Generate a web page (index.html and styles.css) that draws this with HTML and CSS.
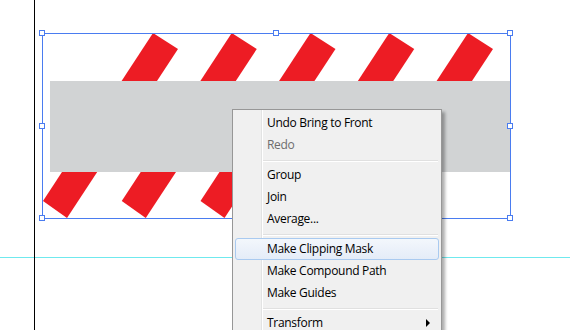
FILE: index.html
```html
<!DOCTYPE html>
<html>
<head>
<meta charset="utf-8">
<link rel="stylesheet" href="styles.css">
</head>
<body>
<div class="canvas">
  <svg class="art" width="570" height="330" viewBox="0 0 570 330">
    <line x1="0" y1="257.5" x2="570" y2="257.5" class="guide"/>
    <line x1="34.5" y1="0" x2="34.5" y2="330" class="edge"/>
    <g class="stripes">
      <polygon points="153,33 178,49 67,218 43,201"/>
      <polygon points="231.75,33 256.75,49 145.75,218 121.75,201"/>
      <polygon points="310.5,33 335.5,49 224.5,218 200.5,201"/>
      <polygon points="389.25,33 414.25,49 303.25,218 279.25,201"/>
      <polygon points="468,33 493,49 382,218 358,201"/>
    </g>
    <rect class="band" x="50" y="81" width="460" height="91"/>
    <rect class="sel" x="42.5" y="33.5" width="468" height="185"/>
    <g class="handles">
      <rect x="39.5" y="30.5" width="5" height="5"/>
      <rect x="273.5" y="30.5" width="5" height="5"/>
      <rect x="507.5" y="30.5" width="5" height="5"/>
      <rect x="39.5" y="123.5" width="5" height="5"/>
      <rect x="507.5" y="123.5" width="5" height="5"/>
      <rect x="39.5" y="215.5" width="5" height="5"/>
      <rect x="273.5" y="215.5" width="5" height="5"/>
      <rect x="507.5" y="215.5" width="5" height="5"/>
    </g>
  </svg>

  <div class="menu">
    <div class="item">Undo Bring to Front</div>
    <div class="item disabled">Redo</div>
    <div class="sep"></div>
    <div class="item">Group</div>
    <div class="item">Join</div>
    <div class="item">Average...</div>
    <div class="sep"></div>
    <div class="item hl">Make Clipping Mask</div>
    <div class="item">Make Compound Path</div>
    <div class="item">Make Guides</div>
    <div class="sep"></div>
    <div class="item sub">Transform<span class="arrow"></span></div>
  </div>
</div>
</body>
</html>
```

FILE: styles.css
```css
html, body {
  margin: 0;
  padding: 0;
  background: #ffffff;
  overflow: hidden;
}

.canvas {
  position: relative;
  width: 570px;
  height: 330px;
  overflow: hidden;
  background: #ffffff;
}

.art {
  display: block;
}

.guide {
  stroke: #6fe9ee;
  stroke-width: 1;
}

.edge {
  stroke: #000000;
  stroke-width: 1;
}

.stripes polygon {
  fill: #ed1c24;
}

.band {
  fill: #d1d3d4;
}

.sel {
  fill: none;
  stroke: #4a7cf0;
  stroke-width: 1;
}

.handles rect {
  fill: #ffffff;
  stroke: #4a7cf0;
  stroke-width: 1;
}

.menu {
  position: absolute;
  left: 232px;
  top: 109px;
  width: 204px;
  padding: 2px;
  border: 1px solid #979797;
  background-color: #f0f0f0;
  background-image: linear-gradient(to right,
      transparent 28px,
      #e2e3e3 28px, #e2e3e3 29px,
      #ffffff 29px, #ffffff 30px,
      transparent 30px);
  box-shadow: 3px 3px 3px rgba(0, 0, 0, 0.32);
  font-family: "Open Sans", "Noto Sans", sans-serif;
  font-size: 12px;
  letter-spacing: -0.3px;
  color: #000000;
}

.item {
  height: 22px;
  line-height: 22px;
  padding-left: 32px;
  box-sizing: border-box;
  display: flex;
  align-items: center;
  justify-content: space-between;
  white-space: nowrap;
}

.item.disabled {
  color: #6d6d6d;
}

.item.hl {
  padding-left: 31px;
  border: 1px solid #a9caf0;
  border-radius: 3px;
  background: linear-gradient(to bottom, #f3f7fc, #e4ecf8);
}

.sep {
  height: 8px;
  box-sizing: border-box;
  padding: 4px 1px 0 28px;
}

.sep::after {
  content: "";
  display: block;
  border-top: 1px solid #e0e0e0;
  border-bottom: 1px solid #ffffff;
}

.arrow {
  width: 0;
  height: 0;
  margin-right: 9px;
  border-left: 4px solid #000000;
  border-top: 4px solid transparent;
  border-bottom: 4px solid transparent;
}
```
